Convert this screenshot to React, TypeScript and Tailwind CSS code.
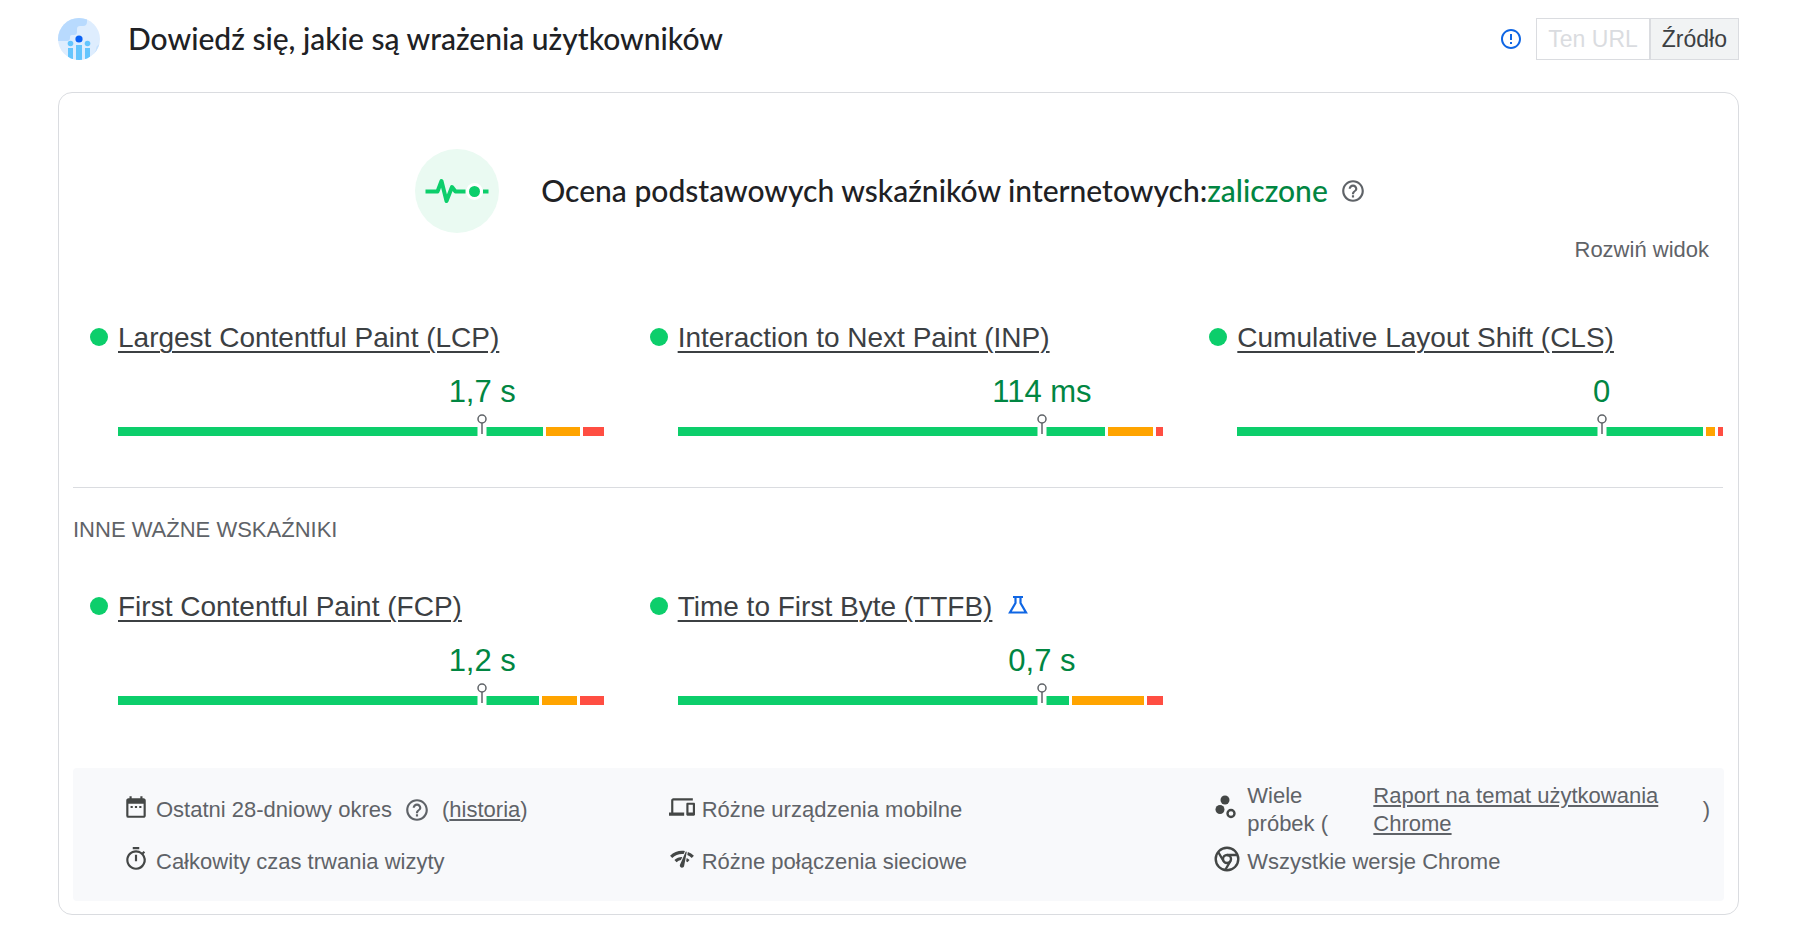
import React from "react"
import { MdDateRange, MdDevices, MdErrorOutline, MdHelpOutline, MdNetworkCheck, MdOutlineTimer } from "react-icons/md"

interface Metric {
    name: string,
    value: string,
    good: number,
    average: number,
    poor: number,
    experimental?: boolean
}

const coreMetrics: Metric[] = [
    { name: "Largest Contentful Paint (LCP)", value: "1,7 s", good: 424, average: 34, poor: 21 },
    { name: "Interaction to Next Paint (INP)", value: "114 ms", good: 428, average: 45, poor: 7 },
    { name: "Cumulative Layout Shift (CLS)", value: "0", good: 465, average: 9, poor: 5 },
]

const otherMetrics: Metric[] = [
    { name: "First Contentful Paint (FCP)", value: "1,2 s", good: 421, average: 35, poor: 24 },
    { name: "Time to First Byte (TTFB)", value: "0,7 s", good: 392, average: 72, poor: 16, experimental: true },
]

function UsersLogo() {
    return (
        <svg className="size-[42px] shrink-0" viewBox="0 0 42 42" aria-hidden="true">
            <clipPath id="logo-circle"><circle cx="21" cy="21" r="21" /></clipPath>
            <g clipPath="url(#logo-circle)">
                <rect width="42" height="42" fill="#deedfe" />
                <path d="M0 0h29v4c0 2-1 4-4 4h-3c-2 0-3 1-3 3v3c0 2-1 3-3 3h-2c-2 0-2 1-2 3s-1 3-3 3H0z" fill="#b8dafe" />
                <path d="M42 26c-3 1-4 3-4 6l-3 6h7z" fill="#c5e1fe" />
                <path d="M10 30h5v12h-5zM27 30h5v12h-5zM18 27h6v15h-6z" fill="#64c5fd" />
                <circle cx="12.500" cy="25.500" r="2.800" fill="#64c5fd" />
                <circle cx="29.500" cy="25.500" r="2.800" fill="#64c5fd" />
                <circle cx="21" cy="21" r="3.600" fill="#0b62f5" />
            </g>
        </svg>
    )
}

function PulseIcon() {
    return (
        <svg className="size-[84px] shrink-0" viewBox="0 0 84 84" fill="none" aria-hidden="true">
            <circle cx="42" cy="42" r="42" fill="#eafaf2" />
            <path d="M10.500 42.500H22.500L26.500 32L31.500 52L37 38L40.500 42.500H50.500" stroke="#0cce6b" strokeWidth="4" strokeLinejoin="round" />
            <path d="M68 42.500h5.500" stroke="#0cce6b" strokeWidth="4" />
            <circle cx="59.500" cy="42.500" r="8.500" fill="#fff" />
            <circle cx="59.500" cy="42.500" r="5.500" fill="#0cce6b" />
        </svg>
    )
}

function FlaskIcon() {
    return (
        <svg className="size-5 shrink-0 ml-1.5 mb-1" viewBox="0 0 20 20" fill="none" stroke="#0f66e4" strokeWidth="2.200" aria-label="Wskaźnik eksperymentalny">
            <path d="M5 2h10M7.500 2v6L2 17.500h16L12.500 8V2" />
        </svg>
    )
}

function SamplesIcon() {
    return (
        <svg className="size-6" viewBox="0 0 24 24" fill="#444746" aria-hidden="true">
            <circle cx="11" cy="5" r="4.500" />
            <circle cx="6" cy="14.500" r="4.500" />
            <circle cx="17" cy="18.500" r="3.500" fill="none" stroke="#444746" strokeWidth="2.400" />
        </svg>
    )
}

function ChromeIcon() {
    return (
        <svg className="size-[26px]" viewBox="0 0 26 26" fill="none" stroke="#444746" strokeWidth="2.400" aria-hidden="true">
            <circle cx="13" cy="13" r="11.300" />
            <circle cx="13" cy="13" r="4" />
            <path d="M13 9H23.500M9.500 15L4.200 6M16.500 15L11.200 24" />
        </svg>
    )
}

function MetricCard({ metric }: { metric: Metric }) {
    return (
        <div className="pl-[17px]">
            <div className="flex items-center gap-[10px] h-9">
                <span className="size-[18px] rounded-full bg-[#0cce6b] shrink-0 mb-0.5"></span>
                <a href="#" className="text-[28px] leading-9 text-[#3c4043] underline decoration-2 underline-offset-4 whitespace-nowrap">{metric.name}</a>
                {metric.experimental && <FlaskIcon />}
            </div>
            <div className="ml-7 mt-4">
                <div className="w-3/4 flex justify-end">
                    <span className="w-0 flex justify-center text-[31px] leading-10 text-[#018642] whitespace-nowrap">{metric.value}</span>
                </div>
                <div className="relative mt-[15px]">
                    <div className="flex gap-[3px] h-[9px]">
                        <div className="bg-[#0cce6b]" style={{ flexGrow: metric.good }}></div>
                        <div className="bg-[#ffa400]" style={{ flexGrow: metric.average }}></div>
                        <div className="bg-[#ff4e42]" style={{ flexGrow: metric.poor }}></div>
                    </div>
                    {/* 75th percentile marker */}
                    <div className="absolute left-3/4 bottom-0 -translate-x-1/2 w-[9px] h-[9px] bg-white"></div>
                    <svg className="absolute left-3/4 bottom-0 -translate-x-1/2 w-3 h-[22px]" viewBox="0 0 12 22" fill="none" stroke="#5f6368" strokeWidth="1.500" aria-hidden="true">
                        <circle cx="6" cy="5" r="4" />
                        <path d="M6 9v11" />
                    </svg>
                </div>
            </div>
        </div>
    )
}

function InfoItem({ icon, children }: { icon: React.ReactNode, children: React.ReactNode }) {
    return (
        <li className="flex items-center">
            <span className="w-[33px] shrink-0 flex text-[#444746] pb-1.5">{icon}</span>
            {children}
        </li>
    )
}

export default function App() {
    return (
        <main className="w-full bg-white pl-[58px] pr-[54px] pt-[18px] pb-6 font-['Liberation_Sans',Arial,sans-serif]">
            <header className="flex items-center justify-between">
                <div className="flex items-center gap-7">
                    <UsersLogo />
                    <h1 className="pb-0.5 font-[Lato,sans-serif] font-medium text-[30px] leading-10 text-[#202124]">Dowiedź się, jakie są wrażenia użytkowników</h1>
                </div>
                <div className="flex items-center">
                    <MdErrorOutline className="text-2xl text-[#0f66e4] mr-[13px]" />
                    <button disabled className="h-[42px] px-[11px] border border-[#dadce0] text-[23px] text-[#dadce0]">Ten URL</button>
                    <button className="h-[42px] px-[11px] border border-[#dadce0] bg-[#f1f3f4] text-[23px] text-[#3c4043]">Źródło</button>
                </div>
            </header>

            <section className="mt-8 border border-[#dadce0] rounded-[14px] px-[14px] pt-14 pb-[13px]">
                <div className="flex items-center justify-center">
                    <PulseIcon />
                    <h2 className="ml-[42px] pb-0.5 font-[Lato,sans-serif] font-medium text-[30px] leading-10 text-[#202124]">
                        Ocena podstawowych wskaźników internetowych:<span className="text-[#018642]">zaliczone</span>
                    </h2>
                    <button aria-label="Pomoc" className="ml-3 mr-4 text-[26px] text-[#5f6368]"><MdHelpOutline /></button>
                </div>
                <div className="flex justify-end pr-[15px]">
                    <button className="text-[22px] leading-[34px] text-[#5f6368]">Rozwiń widok</button>
                </div>

                <div className="grid grid-cols-3 gap-x-[29px] pr-px mt-[53px]">
                    {coreMetrics.map((metric) => <MetricCard metric={metric} key={metric.name} />)}
                </div>
                <hr className="mt-[51px] mr-px border-[#dadce0]" />
                <h3 className="mt-[26px] text-[22px] leading-8 text-[#5f6368] uppercase">Inne ważne wskaźniki</h3>
                <div className="grid grid-cols-3 gap-x-[29px] pr-px mt-[43px]">
                    {otherMetrics.map((metric) => <MetricCard metric={metric} key={metric.name} />)}
                </div>

                <ul className="grid grid-cols-3 gap-x-[50px] gap-y-2 mt-[63px] rounded bg-[#f8f9fb] pl-[50px] pr-[14px] pt-[14px] pb-[23px] text-[22px] leading-7 text-[#5f6368]">
                    <InfoItem icon={<MdDateRange className="size-[26px]" />}>
                        <span>Ostatni 28-dniowy okres</span>
                        <button aria-label="Pomoc" className="mx-3 text-[26px]"><MdHelpOutline /></button>
                        <span>(<a href="#" className="underline decoration-2 underline-offset-2">historia</a>)</span>
                    </InfoItem>
                    <InfoItem icon={<MdDevices className="size-[26px]" />}>Różne urządzenia mobilne</InfoItem>
                    <InfoItem icon={<SamplesIcon />}>
                        <span className="w-[126px] shrink-0 pr-9">Wiele próbek (</span>
                        <a href="#" className="grow underline decoration-2 underline-offset-2">Raport na temat użytkowania Chrome</a>
                        <span>)</span>
                    </InfoItem>
                    <InfoItem icon={<MdOutlineTimer className="size-[26px]" />}>Całkowity czas trwania wizyty</InfoItem>
                    <InfoItem icon={<MdNetworkCheck className="size-[26px]" />}>Różne połączenia sieciowe</InfoItem>
                    <InfoItem icon={<ChromeIcon />}>Wszystkie wersje Chrome</InfoItem>
                </ul>
            </section>
        </main>
    )
}
